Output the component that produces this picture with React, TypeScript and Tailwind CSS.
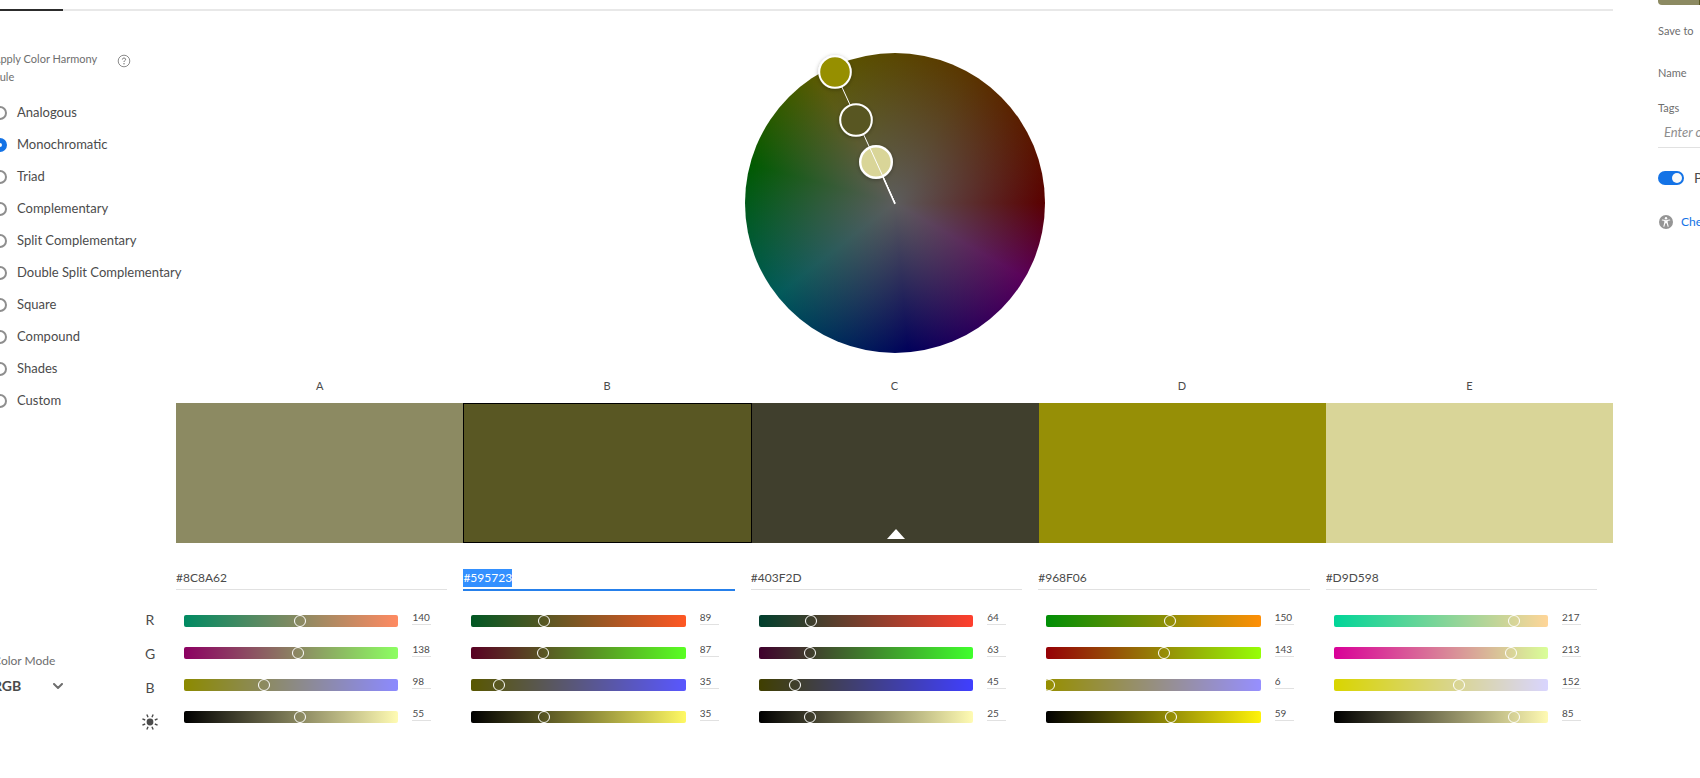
import React, { useEffect, useRef, useState } from "react";

type Swatch = { id: string; hex: string; rgb: [number, number, number]; brightness: number };

const SWATCHES: Swatch[] = [
  { id: "A", hex: "#8C8A62", rgb: [140, 138, 98], brightness: 55 },
  { id: "B", hex: "#595723", rgb: [89, 87, 35], brightness: 35 },
  { id: "C", hex: "#403F2D", rgb: [64, 63, 45], brightness: 25 },
  { id: "D", hex: "#968F06", rgb: [150, 143, 6], brightness: 59 },
  { id: "E", hex: "#D9D598", rgb: [217, 213, 152], brightness: 85 },
];

const RULES = [
  "Analogous",
  "Monochromatic",
  "Triad",
  "Complementary",
  "Split Complementary",
  "Double Split Complementary",
  "Square",
  "Compound",
  "Shades",
  "Custom",
];

const CHANNELS = ["Red", "Green", "Blue"];
const ACTIVE = "B";
const BASE = "C";

function channelGradient(rgb: number[], channel: number) {
  const at = (v: number) => `rgb(${rgb.map((c, i) => (i === channel ? v : c)).join(",")})`;
  return `linear-gradient(to right, ${at(0)}, ${at(255)})`;
}

function brightnessGradient(rgb: number[]) {
  const max = Math.max(...rgb);
  return `linear-gradient(to right, #000, rgb(${rgb.map((c) => Math.round((c * 255) / max)).join(",")}))`;
}

function SliderRow(props: { label: string; value: number; max: number; gradient: string }) {
  const [value, setValue] = useState(props.value);
  return (
    <div className="flex h-3 items-start gap-3.5 pr-8 pl-2">
      <div className="h-3 min-w-0 flex-1 overflow-hidden rounded-xs" style={{ background: props.gradient }}>
        <input
          type="range"
          aria-label={props.label}
          min={0}
          max={props.max}
          value={value}
          onChange={(e) => setValue(Number(e.target.value))}
          className="-ml-2 block h-3 w-[calc(100%+12px)] appearance-none bg-transparent outline-none [&::-webkit-slider-thumb]:size-3 [&::-webkit-slider-thumb]:appearance-none [&::-webkit-slider-thumb]:rounded-full [&::-webkit-slider-thumb]:border [&::-webkit-slider-thumb]:border-white [&::-webkit-slider-thumb]:bg-transparent"
        />
      </div>
      <input
        aria-label={`${props.label} value`}
        value={value}
        onChange={(e) => setValue(Number(e.target.value) || 0)}
        className="-mt-1 h-3.5 w-[19px] border-b border-[#e1e1e1] bg-transparent pb-px text-[10px] leading-3 text-[#4b4b4b] outline-none"
      />
    </div>
  );
}

function SwatchControls({ swatch }: { swatch: Swatch }) {
  const active = swatch.id === ACTIVE;
  const [hex, setHex] = useState(swatch.hex);
  const ref = useRef<HTMLInputElement>(null);
  useEffect(() => {
    if (active) {
      ref.current?.focus();
      ref.current?.select();
    }
  }, [active]);
  return (
    <div className="min-w-0 flex-1">
      <div className="h-[22px] pr-4">
        <input
          ref={ref}
          aria-label={`Hex value of ${swatch.id}`}
          value={hex}
          onChange={(e) => setHex(e.target.value)}
          className={
            "block w-full bg-transparent pb-0.5 text-xs leading-[18px] text-[#4b4b4b] outline-none selection:bg-[#3390ff] selection:text-white " +
            (active ? "border-b-2 border-[#2680eb]" : "border-b border-[#e1e1e1]")
          }
        />
      </div>
      <div className="mt-6 flex flex-col gap-5">
        {CHANNELS.map((name, i) => (
          <SliderRow
            key={name}
            label={`${name} of ${swatch.id}`}
            value={swatch.rgb[i]}
            max={255}
            gradient={channelGradient(swatch.rgb, i)}
          />
        ))}
        <SliderRow
          label={`Brightness of ${swatch.id}`}
          value={swatch.brightness}
          max={100}
          gradient={brightnessGradient(swatch.rgb)}
        />
      </div>
    </div>
  );
}

function ColorWheel() {
  return (
    <div className="relative size-[300px] rounded-full bg-[radial-gradient(closest-side,#5c5c5c,#5c5c5c00),conic-gradient(from_90deg,#5a0000,#5a005a_30deg,#00005a_85deg,#005a5a_142deg,#005a00_195deg,#5a5a00_238deg,#5a3500_300deg,#5a0000)]">
      <svg viewBox="0 0 300 300" className="absolute inset-0 size-full overflow-visible" aria-hidden="true">
        <defs>
          <filter id="lift" x="-40%" y="-40%" width="180%" height="180%">
            <feDropShadow dx="0" dy="1" stdDeviation="2" floodColor="#000" floodOpacity="0.3" />
          </filter>
        </defs>
        <line x1="90" y1="19" x2="150" y2="150" stroke="#fff" strokeWidth="1" />
        <circle cx="90" cy="19" r="15.8" fill="#968F06" stroke="#fff" strokeWidth="2" filter="url(#lift)" />
        <circle cx="111" cy="67" r="15.8" fill="#595723" stroke="#fff" strokeWidth="2" filter="url(#lift)" />
        <circle cx="131" cy="109" r="15.8" fill="#D9D598" stroke="#fff" strokeWidth="2.4" filter="url(#lift)" />
        <line x1="124.500" y1="94" x2="150" y2="150" stroke="#fff" strokeWidth="1" />
        <line x1="138" y1="124" x2="150" y2="151" stroke="#fff" strokeWidth="1.600" />
      </svg>
    </div>
  );
}

function HelpIcon() {
  return (
    <svg viewBox="0 0 14 14" className="size-3.5" fill="none" stroke="#6e6e6e" aria-hidden="true">
      <circle cx="7" cy="7" r="5.800" strokeWidth="0.800" />
      <path d="M5.400 5.500C5.400 4.600 6 4.100 7 4.100s1.600.5 1.600 1.300C8.600 6.500 7 6.600 7 8" strokeWidth="1" />
      <circle cx="7" cy="9.800" r="0.700" fill="#6e6e6e" stroke="none" />
    </svg>
  );
}

function SunIcon() {
  return (
    <svg viewBox="0 0 16 16" className="size-4" aria-hidden="true">
      <circle cx="8" cy="8" r="3.400" fill="#4b4b4b" />
      {[22.5, 67.5, 112.5, 157.5, 202.5, 247.5, 292.5, 337.5].map((a) => (
        <line key={a} x1="8" y1="-0.200" x2="8" y2="2.800" stroke="#4b4b4b" strokeWidth="1.400" transform={`rotate(${a} 8 8)`} />
      ))}
    </svg>
  );
}

function Sidebar() {
  return (
    <div className="flex w-[183px] shrink-0 flex-col">
      <div className="flex items-start pt-[39px]">
        <p className="w-[124px] pr-4 text-[11px] leading-[18px] text-[#6e6e6e]" id="rule-heading">
          Apply Color Harmony Rule
        </p>
        <button type="button" aria-label="About harmony rules" className="mt-1">
          <HelpIcon />
        </button>
      </div>
      <div role="radiogroup" aria-labelledby="rule-heading" className="mt-[11px] flex flex-col">
        {RULES.map((rule) => (
          <label key={rule} className="flex h-8 items-center gap-2.5 text-[13px] whitespace-nowrap text-[#4b4b4b]">
            <input
              type="radio"
              name="rule"
              defaultChecked={rule === "Monochromatic"}
              className="size-3.5 shrink-0 appearance-none rounded-full border-2 border-[#8e8e8e] bg-white checked:border-[5px] checked:border-[#1473e6]"
            />
            {rule}
          </label>
        ))}
      </div>
      <div className="mt-[195px] flex items-start justify-between pr-[18px]">
        <div className="mt-[41px]">
          <label htmlFor="mode" className="block text-xs leading-4 text-[#6e6e6e]">
            Color Mode
          </label>
          <div className="relative mt-2 w-[70px]">
            <select
              id="mode"
              className="block w-full appearance-none bg-transparent text-sm leading-[18px] font-bold text-[#4b4b4b] outline-none"
            >
              <option>RGB</option>
            </select>
            <svg viewBox="0 0 10 6" className="pointer-events-none absolute top-1.5 right-0 h-1.5 w-2.5" fill="none" stroke="#6e6e6e" strokeWidth="2" strokeLinecap="round" aria-hidden="true">
              <path d="M1 1l4 4 4-4" />
            </svg>
          </div>
        </div>
        <div className="flex w-4 flex-col items-center gap-[18px] text-sm leading-4 text-[#4b4b4b]">
          <span>R</span>
          <span>G</span>
          <span>B</span>
          <SunIcon />
        </div>
      </div>
    </div>
  );
}

function SavePanel() {
  return (
    <aside className="w-[205px] shrink-0 text-[11px] text-[#6e6e6e]">
      <div className="flex h-[5px] overflow-hidden rounded-b">
        <div className="flex-1 bg-[#8C8A62]" />
        <div className="flex-1 bg-[#595723]" />
        <div className="flex-1 bg-[#403F2D]" />
        <div className="flex-1 bg-[#968F06]" />
        <div className="flex-1 bg-[#D9D598]" />
      </div>
      <p className="mt-[18px] leading-4">Save to</p>
      <p className="mt-[26px] leading-4">Name</p>
      <label htmlFor="tags" className="mt-[19px] block leading-4">
        Tags
      </label>
      <input
        id="tags"
        placeholder="Enter or select"
        className="mt-1 block h-7 w-full border-b border-[#e1e1e1] bg-transparent px-1.5 pb-1 text-[13px] italic outline-none placeholder:text-[#8e8e8e]"
      />
      <label className="mt-5 flex items-center gap-2.5 text-sm leading-5 whitespace-nowrap text-[#4b4b4b]">
        <span className="relative flex h-3.5 w-[26px] shrink-0">
          <input
            type="checkbox"
            role="switch"
            defaultChecked
            className="size-full appearance-none rounded-full bg-[#b3b3b3] checked:bg-[#1473e6]"
          />
          <span className="pointer-events-none absolute top-0.5 right-0.5 size-2.5 rounded-full bg-[#fafafa]" />
        </span>
        Publish to Explore
      </label>
      <a href="#accessibility" className="mt-6 flex items-center gap-2 pl-px text-xs leading-5 whitespace-nowrap text-[#1473e6]">
        <svg viewBox="0 0 14 14" className="size-3.5 shrink-0" aria-hidden="true">
          <circle cx="7" cy="7" r="7" fill="#959595" />
          <circle cx="7" cy="3.300" r="1.200" fill="#fff" />
          <path d="M3.300 5l2.600.5v2L4.900 11.300M10.700 5l-2.600.5v2l1 3.800" fill="none" stroke="#fff" strokeWidth="1.100" strokeLinecap="round" />
          <path d="M5.900 5.300h2.200v3H5.900z" fill="#fff" />
        </svg>
        Check accessibility
      </a>
    </aside>
  );
}

export default function App() {
  return (
    <div className="min-h-screen overflow-hidden bg-white font-['Lato',sans-serif]">
      <div className="-mr-[163px] -ml-[7px] flex gap-[45px]">
        <main className="min-w-0 flex-1">
          <div className="flex h-[11px] items-end bg-white">
            <div className="h-0.5 w-[70px] bg-[#2c2c2c]" />
            <div className="h-0.5 flex-1 bg-[#e8e8e8]" />
          </div>
          <div className="flex">
            <Sidebar />
            <section className="min-w-0 flex-1 pt-[42px]">
              <div className="flex justify-center">
                <ColorWheel />
              </div>
              <div className="mt-[25px] flex text-center text-[11px] leading-4 text-[#4b4b4b]">
                {SWATCHES.map((s) => (
                  <span key={s.id} className="flex-1">
                    {s.id}
                  </span>
                ))}
              </div>
              <div className="mt-[9px] flex h-[140px]">
                {SWATCHES.map((s) => (
                  <button
                    key={s.id}
                    type="button"
                    aria-label={`Swatch ${s.id}`}
                    className={"flex flex-1 items-end justify-center pb-1 " + (s.id === ACTIVE ? "border border-black" : "")}
                    style={{ backgroundColor: s.hex }}
                  >
                    {s.id === BASE && (
                      <svg viewBox="0 0 18 10" className="h-2.5 w-[18px]" aria-hidden="true">
                        <path d="M9 0l9 10H0z" fill="#fff" />
                      </svg>
                    )}
                  </button>
                ))}
              </div>
              <div className="mt-[26px] flex">
                {SWATCHES.map((s) => (
                  <SwatchControls key={s.id} swatch={s} />
                ))}
              </div>
            </section>
          </div>
        </main>
        <SavePanel />
      </div>
    </div>
  );
}
